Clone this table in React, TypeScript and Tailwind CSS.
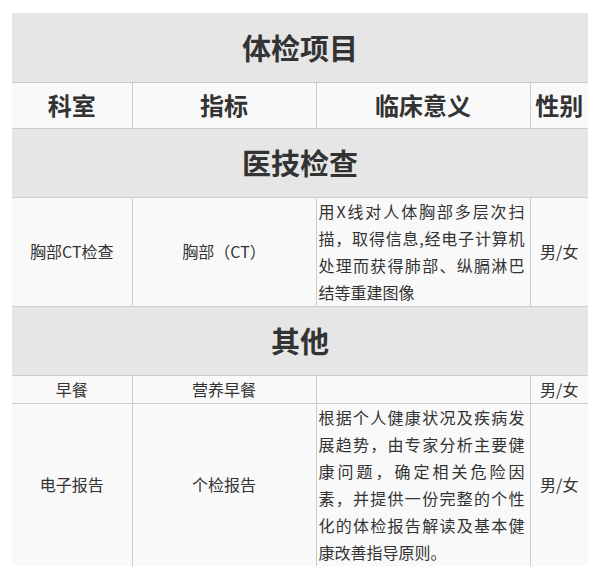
import React from "react";

type Row = {
  dept: string;
  item: string;
  meaning: string;
  sex: string;
};

type Section = {
  title: string;
  rows: Row[];
};

const sections: Section[] = [
  {
    title: "医技检查",
    rows: [
      {
        dept: "胸部CT检查",
        item: "胸部（CT）",
        meaning: "用X线对人体胸部多层次扫描，取得信息,经电子计算机处理而获得肺部、纵膈淋巴结等重建图像",
        sex: "男/女",
      },
    ],
  },
  {
    title: "其他",
    rows: [
      { dept: "早餐", item: "营养早餐", meaning: "", sex: "男/女" },
      {
        dept: "电子报告",
        item: "个检报告",
        meaning:
          "根据个人健康状况及疾病发展趋势，由专家分析主要健康问题，确定相关危险因素，并提供一份完整的个性化的体检报告解读及基本健康改善指导原则。",
        sex: "男/女",
      },
    ],
  },
];

const font = { fontFamily: '"Noto Sans CJK SC", "Noto Sans", sans-serif' };

function TitleRow({ text, first }: { text: string; first?: boolean }) {
  return (
    <tr>
      <td
        colSpan={4}
        className={`h-[69px] bg-[#e6e6e6] text-center text-[29px] font-bold text-[#333] ${
          first ? "" : "border-t border-[#cccccc]"
        }`}
      >
        {text}
      </td>
    </tr>
  );
}

export default function App() {
  return (
    <div className="bg-white pt-[13px] px-[12px] pb-[15px]" style={font}>
      <table className="w-[576px] table-fixed border-collapse text-[#333]">
        <colgroup>
          <col className="w-[120px]" />
          <col className="w-[184px]" />
          <col className="w-[214px]" />
          <col className="w-[58px]" />
        </colgroup>
        <tbody>
          <TitleRow text="体检项目" first />
          <tr className="bg-[#f9f9f9] text-[24px] font-bold">
            <td className="h-[46px] border-t border-[#cccccc] text-center">科室</td>
            <td className="border-t border-l border-[#cccccc] text-center">指标</td>
            <td className="border-t border-l border-[#cccccc] text-center">临床意义</td>
            <td className="border-t border-l border-[#cccccc] text-center">性别</td>
          </tr>
          {sections.map((s) => (
            <React.Fragment key={s.title}>
              <TitleRow text={s.title} />
              {s.rows.map((r) => (
                <tr key={r.dept} className="bg-[#f9f9f9] text-[16px] leading-[27px]">
                  <td className="border-t border-[#cccccc] text-center align-middle">{r.dept}</td>
                  <td className="border-t border-l border-[#cccccc] text-center align-middle">
                    {r.item}
                  </td>
                  <td className="h-[28px] border-t border-l border-[#cccccc] pl-[2px] pr-[5px] text-justify align-middle">
                    {r.meaning}
                  </td>
                  <td className="border-t border-l border-[#cccccc] text-center align-middle">
                    {r.sex}
                  </td>
                </tr>
              ))}
            </React.Fragment>
          ))}
        </tbody>
      </table>
    </div>
  );
}
